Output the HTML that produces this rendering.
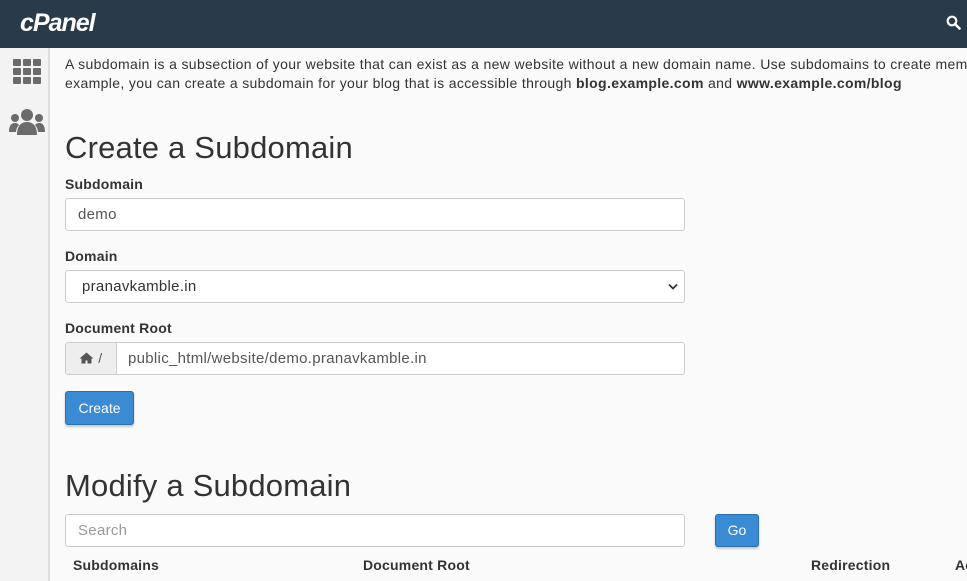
<!DOCTYPE html>
<html><head><style>
body{margin:0;width:967px;height:581px;overflow:hidden;background:#fafafa;font-family:"Liberation Sans",sans-serif;color:#333;position:relative}
.hdr{position:absolute;left:0;top:0;width:967px;height:48px;background:#293a4a}
.logo{position:absolute;left:20px;top:9px;color:#fff;font:italic bold 25px "Liberation Sans",sans-serif;letter-spacing:-1px}
.side{position:absolute;left:0;top:48px;width:48px;height:533px;background:#f3f3f3;border-right:2px solid #ddd}
.a{position:absolute;white-space:nowrap}
.p{font-size:14px;line-height:19px;left:65px;top:55px;letter-spacing:.35px}
h1{position:absolute;margin:0;font-weight:normal;font-size:31px;left:65px;white-space:nowrap;letter-spacing:.2px}
.lbl{font-size:14px;font-weight:bold;left:65px;letter-spacing:.2px}
.inp{position:absolute;left:65px;width:620px;height:33px;border:1px solid #ccc;border-radius:3px;background:#fff;font-size:15px;letter-spacing:.3px;line-height:32px;box-sizing:border-box;padding-left:12px;color:#555}
.btn{position:absolute;background:#3a8ad4;color:#fff;border:1px solid #2a6fb0;border-radius:3px;font-size:14px;text-align:center;box-sizing:border-box;box-shadow:0 2px 2px rgba(0,0,0,.2)}
</style></head><body>
<div class="hdr"><div class="logo">cPanel</div>
<svg style="position:absolute;left:946px;top:15px" width="15" height="15" viewBox="0 0 15 15"><circle cx="6" cy="6" r="4.3" fill="none" stroke="#fff" stroke-width="2.2"/><path d="M9 9l4.5 4.5" stroke="#fff" stroke-width="2.6" stroke-linecap="round"/></svg></div>
<div class="side">
<svg style="position:absolute;left:13px;top:11px" width="29" height="25"><g fill="#6b6b6b"><rect x="0" y="0" width="8" height="7" rx="1"/><rect x="10" y="0" width="8" height="7" rx="1"/><rect x="20" y="0" width="8" height="7" rx="1"/><rect x="0" y="9" width="8" height="7" rx="1"/><rect x="10" y="9" width="8" height="7" rx="1"/><rect x="20" y="9" width="8" height="7" rx="1"/><rect x="0" y="18" width="8" height="7" rx="1"/><rect x="10" y="18" width="8" height="7" rx="1"/><rect x="20" y="18" width="8" height="7" rx="1"/></g></svg>
<svg style="position:absolute;left:9px;top:60px" width="36" height="28"><g fill="#6b6b6b"><circle cx="18" cy="7" r="6"/><path d="M8 27c0-9 4-13 10-13s10 4 10 13z"/><circle cx="6" cy="10" r="4"/><circle cx="30" cy="10" r="4"/><path d="M0 24c0-6 2-9 6-9 2 0 3 1 4 2-2 2-3 5-3 7z"/><path d="M36 24c0-6-2-9-6-9-2 0-3 1-4 2 2 2 3 5 3 7z"/></g></svg>
</div>
<div class="a p">A subdomain is a subsection of your website that can exist as a new website without a new domain name. Use subdomains to create memorable<br>example, you can create a subdomain for your blog that is accessible through <b>blog.example.com</b> and <b>www.example.com/blog</b></div>
<h1 style="top:130px">Create a Subdomain</h1>
<div class="a lbl" style="top:176px">Subdomain</div>
<div class="inp" style="top:198px">demo</div>
<div class="a lbl" style="top:248px">Domain</div>
<div class="inp" style="top:270px;padding-left:16px;color:#333">pranavkamble.in
<svg style="position:absolute;right:6px;top:12px" width="10" height="8"><path d="M1 1.5l4 4 4-4" fill="none" stroke="#333" stroke-width="1.8"/></svg></div>
<div class="a lbl" style="top:320px">Document Root</div>
<div class="inp" style="top:342px;padding-left:62px">public_html/website/demo.pranavkamble.in
<div style="position:absolute;left:0;top:0;width:50px;height:31px;background:#eee;border-right:1px solid #ccc;border-radius:3px 0 0 3px;color:#555;font-size:14px;line-height:31px;text-indent:13px"><svg width="15" height="12" viewBox="0 0 15 12" style="vertical-align:-1px"><path d="M7.5 0.5L0.5 6.5h2v5h4v-3h2v3h4v-5h2z" fill="#555"/></svg> /</div></div>
<div class="btn" style="left:65px;top:391px;width:69px;height:34px;line-height:32px">Create</div>
<h1 style="top:468px">Modify a Subdomain</h1>
<div class="inp" style="top:514px;color:#999">Search</div>
<div class="btn" style="left:715px;top:514px;width:44px;height:33px;line-height:31px">Go</div>
<div class="a lbl" style="top:557px;left:73px">Subdomains</div>
<div class="a lbl" style="top:557px;left:363px">Document Root</div>
<div class="a lbl" style="top:557px;left:811px">Redirection</div>
<div class="a lbl" style="top:557px;left:955px">Ac</div>
</body></html>
